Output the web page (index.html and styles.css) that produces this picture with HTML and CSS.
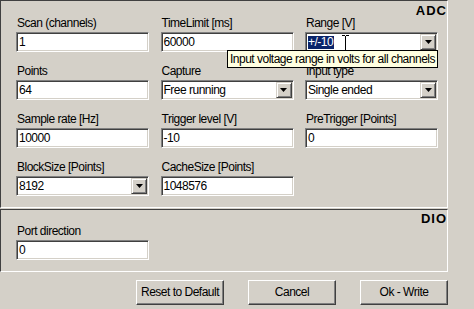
FILE: index.html
```html
<!DOCTYPE html>
<html>
<head>
<meta charset="utf-8">
<link rel="stylesheet" href="styles.css">
</head>
<body>
<div class="dialog">
  <section class="panel adc">
    <div class="panel-title">ADC</div>
    <div class="fields">
      <div class="field"><div class="label">Scan (channels)</div><div class="edit">1</div></div>
      <div class="field"><div class="label">TimeLimit [ms]</div><div class="edit">60000</div></div>
      <div class="field"><div class="label">Range [V]</div><div class="edit combo"><div class="value"><span class="sel">+/-10</span></div><div class="drop"><svg width="7" height="4" viewBox="0 0 7 4"><polygon points="0,0 7,0 3.5,4" fill="#000"/></svg></div></div></div>

      <div class="field"><div class="label">Points</div><div class="edit">64</div></div>
      <div class="field"><div class="label">Capture</div><div class="edit combo"><div class="value">Free running</div><div class="drop"><svg width="7" height="4" viewBox="0 0 7 4"><polygon points="0,0 7,0 3.5,4" fill="#000"/></svg></div></div></div>
      <div class="field"><div class="label">Input type</div><div class="edit combo"><div class="value">Single ended</div><div class="drop"><svg width="7" height="4" viewBox="0 0 7 4"><polygon points="0,0 7,0 3.5,4" fill="#000"/></svg></div></div></div>

      <div class="field"><div class="label">Sample rate [Hz]</div><div class="edit">10000</div></div>
      <div class="field"><div class="label">Trigger level [V]</div><div class="edit">-10</div></div>
      <div class="field"><div class="label">PreTrigger [Points]</div><div class="edit">0</div></div>

      <div class="field"><div class="label">BlockSize [Points]</div><div class="edit combo"><div class="value">8192</div><div class="drop"><svg width="7" height="4" viewBox="0 0 7 4"><polygon points="0,0 7,0 3.5,4" fill="#000"/></svg></div></div></div>
      <div class="field"><div class="label">CacheSize [Points]</div><div class="edit">1048576</div></div>
    </div>
  </section>

  <section class="panel dio">
    <div class="panel-title">DIO</div>
    <div class="fields">
      <div class="field"><div class="label">Port direction</div><div class="edit">0</div></div>
    </div>
  </section>

  <div class="buttons">
    <div class="btn">Reset to Default</div>
    <div class="btn">Cancel</div>
    <div class="btn">Ok - Write</div>
  </div>

  <svg class="ibeam" width="9" height="17" viewBox="0 0 9 17">
    <path d="M1 0.5H4M5 0.5H8M4.5 1V16M1 16.5H4M5 16.5H8" stroke="#000" stroke-width="1" fill="none"/>
  </svg>
  <div class="tooltip">Input voltage range in volts for all channels</div>
</div>
</body>
</html>
```
FILE: styles.css
```css
html, body {
  margin: 0;
  padding: 0;
}
body {
  background: #d4d0c8;
  font-family: "Liberation Sans", Arial, sans-serif;
  font-size: 12px;
  letter-spacing: -0.5px;
  color: #000;
  width: 474px;
  height: 309px;
  overflow: hidden;
}
.dialog {
  position: relative;
  width: 474px;
  height: 309px;
}
.panel {
  width: 448px;
  box-sizing: border-box;
  border: 1px solid;
  border-color: #404040 #ffffff #ffffff #404040;
  padding: 0 0 11px 15px;
}
.dio {
  margin-top: 1px;
}
.panel-title {
  text-align: right;
  font-weight: bold;
  font-size: 13px;
  line-height: 13px;
  letter-spacing: 1px;
  margin-top: 3px;
}
.dio .panel-title {
  margin-top: 2px;
}
.fields {
  display: grid;
  grid-template-columns: 133px 133px 133px;
  column-gap: 11.5px;
  row-gap: 13px;
}
.field {
  display: flex;
  flex-direction: column;
  gap: 2px;
}
.label {
  line-height: 13px;
  padding-left: 1px;
  white-space: nowrap;
}
.edit {
  height: 20px;
  box-sizing: border-box;
  border: 1px solid;
  border-color: #808080 #ffffff #ffffff #808080;
  box-shadow: inset 1px 1px #404040, inset -1px -1px #d4d0c8;
  background: #ffffff;
  padding-left: 2px;
  line-height: 18px;
  white-space: nowrap;
}
.combo {
  display: flex;
  align-items: flex-start;
}
.combo .value {
  flex: 1;
  line-height: 18px;
}
.sel {
  display: inline-block;
  background: #0a246a;
  color: #ffffff;
  line-height: 13px;
  padding-right: 1px;
}
.drop {
  width: 16px;
  height: 16px;
  margin: 1px;
  box-sizing: border-box;
  background: #d4d0c8;
  border: 1px solid;
  border-color: #d4d0c8 #404040 #404040 #d4d0c8;
  box-shadow: inset 1px 1px #ffffff, inset -1px -1px #808080;
  display: flex;
  align-items: center;
  justify-content: center;
}
.drop svg {
  display: block;
}
.buttons {
  display: flex;
  justify-content: flex-end;
  gap: 24px;
  padding-right: 26px;
  margin-top: 8px;
}
.btn {
  width: 88px;
  height: 25px;
  box-sizing: border-box;
  border: 1px solid;
  border-color: #ffffff #404040 #404040 #ffffff;
  box-shadow: inset -1px -1px #808080, inset 1px 1px #d4d0c8;
  display: flex;
  align-items: center;
  justify-content: center;
  line-height: 13px;
  white-space: nowrap;
}
.tooltip {
  position: absolute;
  left: 227px;
  top: 50px;
  width: 211px;
  height: 18px;
  box-sizing: border-box;
  border: 1px solid #000;
  background: #ffffe1;
  padding-left: 2px;
  line-height: 16px;
  white-space: nowrap;
}
.ibeam {
  position: absolute;
  left: 341px;
  top: 35px;
}
```
